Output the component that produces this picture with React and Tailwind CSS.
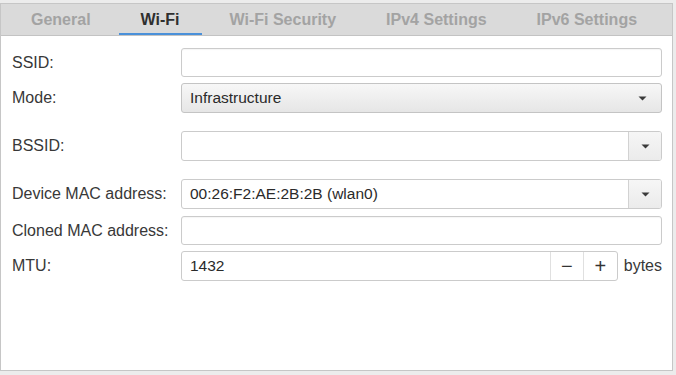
const font = { fontFamily: '"Liberation Sans", Arial, sans-serif' }

function Arrow() {
  return (
    <svg width="9" height="5" viewBox="0 0 9 5" className="block">
      <path d="M0.5 0.5 L8.5 0.5 L4.5 4.5 Z" fill="#3a3a3a" />
    </svg>
  )
}

function Label({ children }) {
  return <div className="w-[169px] shrink-0 text-[16px] text-[#383838]">{children}</div>
}

function Entry({ value = '' }) {
  return (
    <div className="flex-1 h-full flex items-center px-[8px] bg-white border border-[#cbcbcb] rounded-[3px] text-[15.5px] text-[#2a2a2a] shadow-[inset_0_1px_1px_rgba(0,0,0,0.04)]">
      {value}
    </div>
  )
}

function ComboEntry({ value = '' }) {
  return (
    <div className="flex-1 h-full flex bg-white border border-[#cbcbcb] rounded-[3px] text-[15.5px] text-[#2a2a2a] overflow-hidden">
      <div className="flex-1 flex items-center px-[8px]">{value}</div>
      <div className="w-[33px] flex items-center justify-center border-l border-[#d2d2d2] bg-gradient-to-b from-[#f6f6f6] to-[#ebebeb]">
        <Arrow />
      </div>
    </div>
  )
}

const tabs = ['General', 'Wi-Fi', 'Wi-Fi Security', 'IPv4 Settings', 'IPv6 Settings']

export default function App() {
  return (
    <div className="w-[676px] h-[375px] bg-[#ececec] pt-[3px]" style={font}>
      <div className="w-[673px] h-[368px] border border-[#c6c6c6] bg-white flex flex-col">

        {/* Tabs */}
        <div className="h-[32px] shrink-0 bg-[#dadada] border-b border-[#c3c3c3] flex pl-[5px]">
          {tabs.map(t => (
            <div key={t} className={`relative px-[25px] flex items-center text-[16px] font-bold ${t === 'Wi-Fi' ? 'text-[#2f2f2f]' : 'text-[#a3a3a3]'}`}>
              {t}
              {t === 'Wi-Fi' && <div className="absolute left-[3px] right-[3px] bottom-0 h-[2px] bg-[#4a90d9]" />}
            </div>
          ))}
        </div>

        {/* Form */}
        <div className="flex flex-col pl-[11px] pr-[10px] pt-[12px]">
          <div className="flex items-center h-[29px]">
            <Label>SSID:</Label>
            <Entry />
          </div>

          <div className="flex items-center h-[30px] mt-[6px]">
            <Label>Mode:</Label>
            <div className="flex-1 h-full flex items-center justify-between pl-[8px] pr-[14px] border border-[#c4c4c4] rounded-[3px] bg-gradient-to-b from-[#f7f7f7] to-[#e6e6e6] text-[15.5px] text-[#2a2a2a]">
              Infrastructure
              <Arrow />
            </div>
          </div>

          <div className="flex items-center h-[30px] mt-[18px]">
            <Label>BSSID:</Label>
            <ComboEntry />
          </div>

          <div className="flex items-center h-[30px] mt-[18px]">
            <Label>Device MAC address:</Label>
            <ComboEntry value="00:26:F2:AE:2B:2B (wlan0)" />
          </div>

          <div className="flex items-center h-[29px] mt-[7px]">
            <Label>Cloned MAC address:</Label>
            <Entry />
          </div>

          <div className="flex items-center h-[30px] mt-[6px]">
            <Label>MTU:</Label>
            <div className="flex-1 h-full flex bg-white border border-[#cbcbcb] rounded-[3px] text-[15.5px] text-[#2a2a2a] overflow-hidden">
              <div className="flex-1 flex items-center px-[8px]">1432</div>
              <div className="w-[33px] flex items-center justify-center border-l border-[#e0e0e0] text-[20px] text-[#333] leading-none">−</div>
              <div className="w-[34px] flex items-center justify-center border-l border-[#e0e0e0] text-[20px] text-[#333] leading-none">+</div>
            </div>
            <div className="ml-[6px] text-[16px] text-[#383838]">bytes</div>
          </div>
        </div>

      </div>
    </div>
  )
}
